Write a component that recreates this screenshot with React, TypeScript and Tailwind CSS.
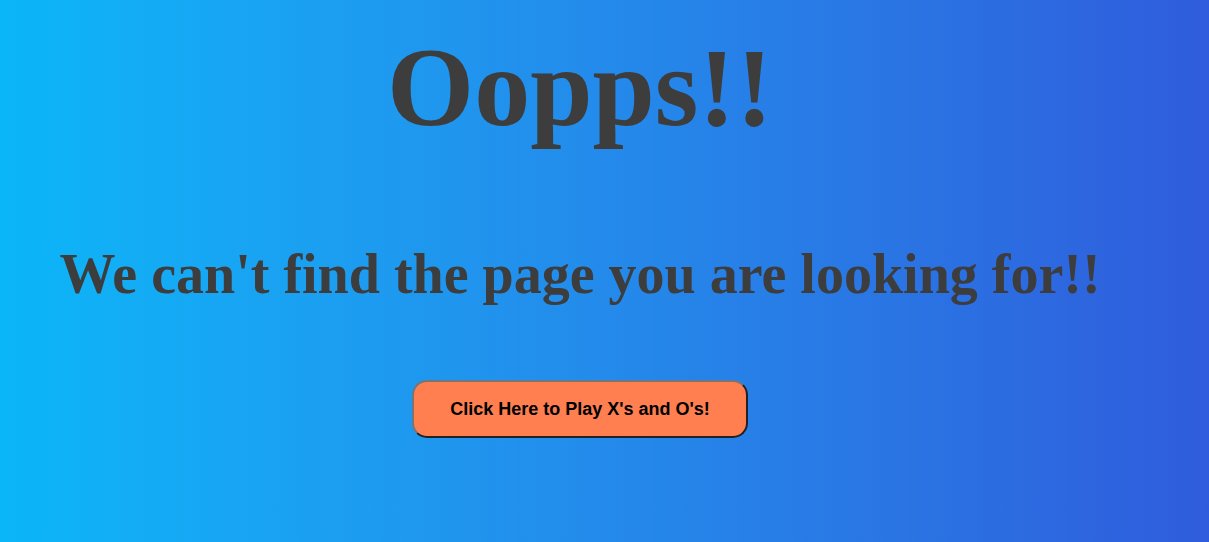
import React from "react";

export default function App() {
  return (
    <div className="min-h-screen w-full bg-linear-to-r from-[#0ab6f8] to-[#2f5cdc] pt-[25px] pr-[49px] text-center">
      <div className="flex flex-col items-center">
        {/* heading */}
        <h1 className="text-[112px] leading-[124px] font-bold text-[#3d3d3d] font-['Liberation_Serif','Times_New_Roman',serif]">
          Oopps!!
        </h1>
        <h2 className="mt-[94px] text-[56px] leading-[62px] font-bold text-[#3d3d3d] font-['Liberation_Serif','Times_New_Roman',serif]">
          We can't find the page you are looking for!!
        </h2>

        {/* play button */}
        <button className="mt-[75px] h-[58px] w-[336px] rounded-[15px] border-2 border-t-[#767676] border-l-[#767676] border-r-[#222222] border-b-[#222222] bg-[#ff7f50] text-[18px] font-bold text-black font-['Liberation_Sans',Arial,sans-serif]">
          Click Here to Play X's and O's!
        </button>
      </div>
    </div>
  );
}
